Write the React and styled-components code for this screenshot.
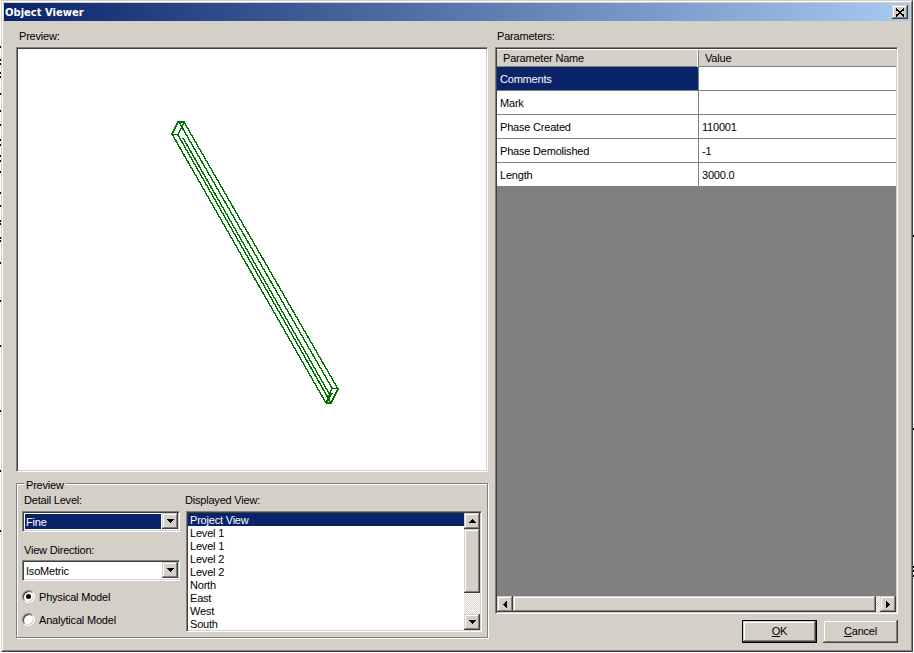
import React from 'react';
import styled, { createGlobalStyle, css } from 'styled-components';

const FACE = '#d4d0c8';
const NAVY = '#0a246a';

const leftSpots = [46, 59, 63, 72, 76, 93, 110, 124, 139, 144, 155, 160, 171, 192, 205, 220, 223, 237, 240, 262, 300, 345, 410, 470, 530];
const rightSpots = [235, 428, 566, 570, 575];

const spotLayers = [
  ...leftSpots.map((y) => `linear-gradient(#000, #000) 0 ${y}px / 1px 2px no-repeat`),
  ...rightSpots.map((y) => `linear-gradient(#000, #000) 913px ${y}px / 1px 2px no-repeat`),
].join(', ');

const GlobalStyle = createGlobalStyle`
  html, body {
    margin: 0;
    padding: 0;
    background: #fff;
    overflow: hidden;
  }
`;

const sunken = css`
  box-sizing: border-box;
  border-style: solid;
  border-width: 1px;
  border-color: #808080 #fff #fff #808080;
  box-shadow: inset 1px 1px #404040, inset -1px -1px ${FACE};
  padding: 1px;
`;

const raised = css`
  box-shadow: inset -1px -1px #404040, inset 1px 1px ${FACE}, inset -2px -2px #808080, inset 2px 2px #fff;
`;

const Page = styled.div`
  width: 914px;
  height: 653px;
  background: ${spotLayers}, #fff;
  font-family: "Liberation Sans", Arial, sans-serif;
  font-size: 11px;
  letter-spacing: -0.2px;
  color: #000;
`;

const Outer = styled.div`
  box-sizing: border-box;
  width: 912px;
  height: 652px;
  margin-left: 1px;
  border-style: solid;
  border-width: 1px;
  border-color: ${FACE} #404040 #404040 ${FACE};
`;

const Frame = styled.div`
  box-sizing: border-box;
  height: 100%;
  padding: 1px;
  background: ${FACE};
  border-style: solid;
  border-width: 1px;
  border-color: #fff #808080 #808080 #fff;
  display: flex;
  flex-direction: column;
`;

const TitleBar = styled.div`
  flex: none;
  height: 18px;
  padding: 0 2px 0 1px;
  display: flex;
  align-items: center;
  justify-content: space-between;
  background: linear-gradient(90deg, ${NAVY}, #a6caf0);
  color: #fff;
  font-family: "DejaVu Sans", Verdana, sans-serif;
  font-weight: 700;
  font-size: 10px;
  letter-spacing: 0;
`;

const CloseButton = styled.div`
  width: 16px;
  height: 14px;
  background: ${FACE};
  display: flex;
  align-items: center;
  justify-content: center;
  ${raised}
`;

const Content = styled.div`
  flex: 1;
  display: flex;
  gap: 7px;
  padding-left: 12px;
`;

const Column = styled.div`
  width: ${({ $width }) => $width}px;
  padding-top: 8px;
`;

const PaneLabel = styled.div`
  height: 18px;
  line-height: 15px;
  padding-left: ${({ $indent }) => $indent}px;
`;

const PreviewBox = styled.div`
  ${sunken}
  height: 425px;
  background: #fff;
`;

const Group = styled.div`
  position: relative;
  box-sizing: border-box;
  height: 155px;
  margin-top: 11px;
  padding: 10px 0 0 5px;
  border: 1px solid #808080;
  box-shadow: inset 1px 1px #fff, 1px 1px #fff;
  display: grid;
  grid-template-columns: 158px 296px;
  column-gap: 6px;
  align-items: start;
`;

const Legend = styled.div`
  position: absolute;
  top: -5px;
  left: 7px;
  padding: 0 2px;
  line-height: 13px;
  background: ${FACE};
`;

const FieldLabel = styled.div`
  height: 13px;
  line-height: 13px;
  margin: ${({ $top = 0 }) => $top}px 0 ${({ $bottom = 4 }) => $bottom}px;
  text-indent: ${({ $indent = 2 }) => $indent}px;
`;

const Combo = styled.div`
  ${sunken}
  height: 21px;
  background: #fff;
  display: flex;
`;

const ComboValue = styled.div`
  flex: 1;
  margin: 1px;
  padding-left: 1px;
  height: 15px;
  line-height: 17px;
  background: ${({ $selected }) => ($selected ? NAVY : '#fff')};
  color: ${({ $selected }) => ($selected ? '#fff' : '#000')};
`;

const ScrollButton = styled.div`
  flex: none;
  width: 16px;
  height: 16px;
  box-sizing: border-box;
  background: ${FACE};
  display: flex;
  align-items: center;
  justify-content: center;
  ${raised}
`;

const RadioRow = styled.div`
  display: flex;
  align-items: center;
  gap: 4px;
  height: 13px;
  margin-top: ${({ $top }) => $top}px;
`;

const RadioCircle = styled.div`
  box-sizing: border-box;
  width: 13px;
  height: 13px;
  border-radius: 50%;
  background: #fff;
  border: 1px solid;
  border-color: #808080 #fff #fff #808080;
  box-shadow: inset 1px 1px #404040, inset -1px -1px ${FACE};
  display: flex;
  align-items: center;
  justify-content: center;

  &::after {
    content: '';
    display: ${({ $checked }) => ($checked ? 'block' : 'none')};
    width: 5px;
    height: 5px;
    border-radius: 50%;
    background: #000;
  }
`;

const ListBox = styled.div`
  ${sunken}
  height: 121px;
  background: #fff;
  display: flex;
`;

const ListItems = styled.div`
  flex: 1;
`;

const ListItem = styled.div`
  height: 13px;
  line-height: 15px;
  padding-left: 2px;
  overflow: hidden;
  background: ${({ $selected }) => ($selected ? NAVY : 'transparent')};
  color: ${({ $selected }) => ($selected ? '#fff' : '#000')};
`;

const Track = styled.div`
  flex: 1;
  background: repeating-conic-gradient(#fff 0 25%, ${FACE} 0 50%) 0 0 / 2px 2px;
`;

const VerticalBar = styled.div`
  flex: none;
  width: 16px;
  display: flex;
  flex-direction: column;
`;

const HorizontalBar = styled.div`
  flex: none;
  height: 16px;
  display: flex;
`;

const Thumb = styled.div`
  flex: none;
  box-sizing: border-box;
  background: ${FACE};
  width: ${({ $width = 16 }) => $width}px;
  height: ${({ $height = 16 }) => $height}px;
  ${raised}
`;

const ParamGrid = styled.div`
  ${sunken}
  height: 567px;
  background: #808080;
  display: flex;
  flex-direction: column;
`;

const ParamHeader = styled.div`
  flex: none;
  height: 18px;
  box-sizing: border-box;
  display: grid;
  grid-template-columns: 202px 1fr;
  background: ${FACE};
  border-top: 1px solid #fff;
  border-bottom: 1px solid #808080;
`;

const HeaderCell = styled.div`
  padding-left: ${({ $indent }) => $indent}px;
  line-height: 17px;
  box-shadow: ${({ $divided }) => ($divided ? 'inset -1px 0 #808080, inset -2px 0 #fff' : 'none')};
`;

const ParamRow = styled.div`
  flex: none;
  height: 24px;
  box-sizing: border-box;
  display: grid;
  grid-template-columns: 202px 1fr;
  border-bottom: 1px solid #808080;
  background: #fff;
`;

const ParamCell = styled.div`
  box-sizing: border-box;
  height: 23px;
  padding-left: 3px;
  line-height: 25px;
  background: ${({ $selected }) => ($selected ? NAVY : '#fff')};
  color: ${({ $selected }) => ($selected ? '#fff' : '#000')};
  border-right: ${({ $divided }) => ($divided ? '1px solid #808080' : 'none')};
`;

const GridFill = styled.div`
  flex: 1;
`;

const ButtonRow = styled.div`
  display: flex;
  justify-content: flex-end;
  gap: 6px;
  margin-top: 6px;
`;

const Button = styled.button`
  box-sizing: border-box;
  width: 75px;
  height: 23px;
  padding: 0 0 2px;
  font: inherit;
  letter-spacing: inherit;
  color: #000;
  background: ${FACE};
  border: ${({ $primary }) => ($primary ? '1px solid #000' : 'none')};
  ${raised}

  u {
    text-underline-offset: 1px;
  }
`;

const Arrow = ({ dir }) => {
  const points = {
    up: '3.5,0 7,4 0,4',
    down: '0,0 7,0 3.5,4',
    left: '4,0 4,7 0,3.5',
    right: '0,0 4,3.5 0,7',
  }[dir];
  const vertical = dir === 'up' || dir === 'down';
  return (
    <svg width={vertical ? 7 : 4} height={vertical ? 4 : 7} viewBox={vertical ? '0 0 7 4' : '0 0 4 7'}>
      <polygon points={points} fill="#000" shapeRendering="crispEdges" />
    </svg>
  );
};

const CloseIcon = () => (
  <svg width="10" height="9" viewBox="0 0 10 9">
    <path d="M1 1 L9 8 M9 1 L1 8" stroke="#000" strokeWidth="1.7" fill="none" shapeRendering="crispEdges" />
  </svg>
);

// wire frame of the beam, in page coordinates shifted by the box origin
const beamLines = [
  'M172 134 L178 122 L184 122 L178 135 L172 134',
  'M172 134 L326 403',
  'M178 135 L331 403',
  'M183 138 L330 395',
  'M179 122 L332 388',
  'M184 122 L338 389',
  'M326 403 L331 403 L338 389 L332 388 L326 403',
  'M332 393 L327 402',
];

const Beam = () => (
  <svg width="468" height="421" viewBox="18 49 468 421" style={{ display: 'block' }}>
    {beamLines.map((d) => (
      <path key={d} d={d} fill="none" stroke="#007000" strokeWidth="1.4" shapeRendering="crispEdges" />
    ))}
  </svg>
);

const views = ['Project View', 'Level 1', 'Level 1', 'Level 2', 'Level 2', 'North', 'East', 'West', 'South'];

const params = [
  ['Comments', ''],
  ['Mark', ''],
  ['Phase Created', '110001'],
  ['Phase Demolished', '-1'],
  ['Length', '3000.0'],
];

const App = () => (
  <Page>
    <GlobalStyle />
    <Outer>
      <Frame>
        <TitleBar>
          Object Viewer
          <CloseButton><CloseIcon /></CloseButton>
        </TitleBar>
        <Content>
          <Column $width={472}>
            <PaneLabel $indent={3}>Preview:</PaneLabel>
            <PreviewBox><Beam /></PreviewBox>
            <Group>
              <Legend>Preview</Legend>
              <div>
                <FieldLabel>Detail Level:</FieldLabel>
                <Combo>
                  <ComboValue $selected>Fine</ComboValue>
                  <ScrollButton><Arrow dir="down" /></ScrollButton>
                </Combo>
                <FieldLabel $top={12} $bottom={3}>View Direction:</FieldLabel>
                <Combo>
                  <ComboValue>IsoMetric</ComboValue>
                  <ScrollButton><Arrow dir="down" /></ScrollButton>
                </Combo>
                <RadioRow $top={9}><RadioCircle $checked />Physical Model</RadioRow>
                <RadioRow $top={10}><RadioCircle />Analytical Model</RadioRow>
              </div>
              <div>
                <FieldLabel $indent={-1}>Displayed View:</FieldLabel>
                <ListBox>
                  <ListItems>
                    {views.map((view, i) => (
                      <ListItem key={`${view}-${i}`} $selected={i === 0}>{view}</ListItem>
                    ))}
                  </ListItems>
                  <VerticalBar>
                    <ScrollButton><Arrow dir="up" /></ScrollButton>
                    <Thumb $height={64} />
                    <Track />
                    <ScrollButton><Arrow dir="down" /></ScrollButton>
                  </VerticalBar>
                </ListBox>
              </div>
            </Group>
          </Column>
          <Column $width={403}>
            <PaneLabel $indent={2}>Parameters:</PaneLabel>
            <ParamGrid>
              <ParamHeader>
                <HeaderCell $indent={6} $divided>Parameter Name</HeaderCell>
                <HeaderCell $indent={6}>Value</HeaderCell>
              </ParamHeader>
              {params.map(([name, value], i) => (
                <ParamRow key={name}>
                  <ParamCell $selected={i === 0} $divided>{name}</ParamCell>
                  <ParamCell>{value}</ParamCell>
                </ParamRow>
              ))}
              <GridFill />
              <HorizontalBar>
                <ScrollButton><Arrow dir="left" /></ScrollButton>
                <Thumb $width={363} />
                <Track />
                <ScrollButton><Arrow dir="right" /></ScrollButton>
              </HorizontalBar>
            </ParamGrid>
            <ButtonRow>
              <Button $primary><u>O</u>K</Button>
              <Button><u>C</u>ancel</Button>
            </ButtonRow>
          </Column>
        </Content>
      </Frame>
    </Outer>
  </Page>
);

export default App;
